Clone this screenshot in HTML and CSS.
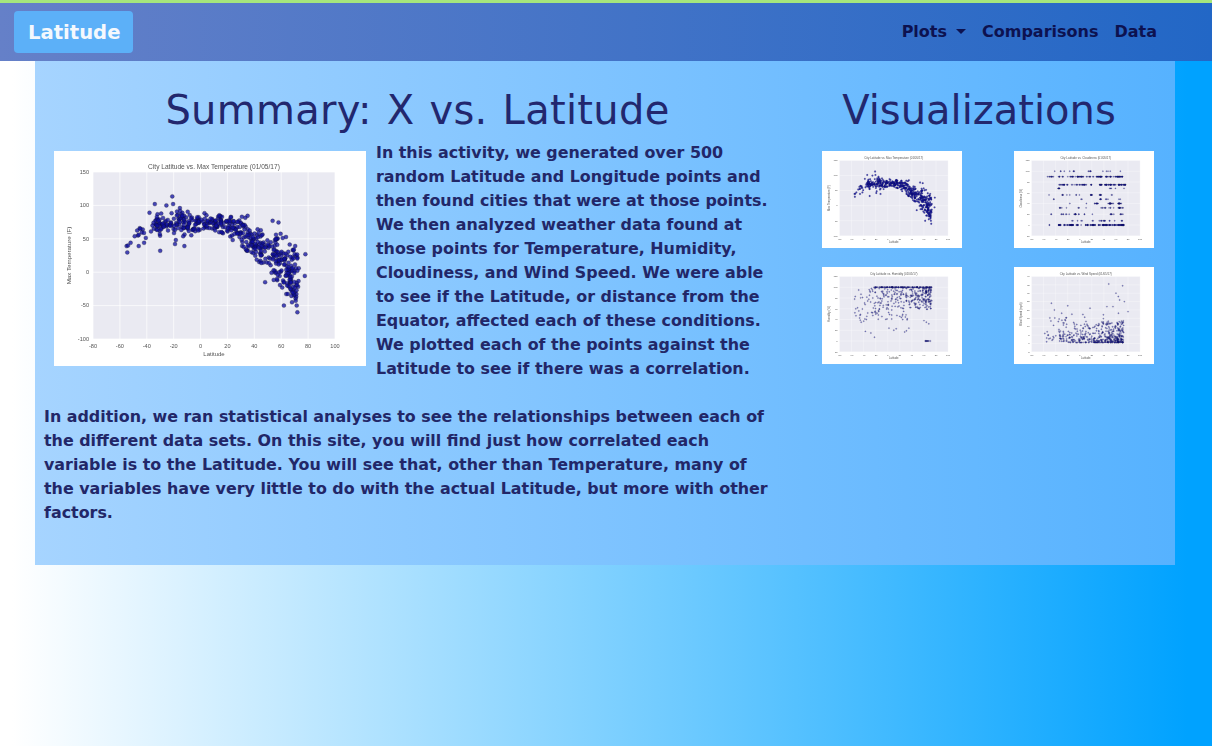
FILE: index.html
```html
<!DOCTYPE html>
<html lang="en">
<head>
    <meta charset="UTF-8">
    <meta name="viewport" content="width=device-width, initial-scale=1.0">
    <title>Latitude</title>
    <link rel="stylesheet" href="styles.css">
</head>
<body>
    <nav class="navbar">
        <a class="brand" href="#">Latitude</a>
        <ul class="nav-links">
            <li><a href="#">Plots<span class="caret"></span></a></li>
            <li><a href="#">Comparisons</a></li>
            <li><a href="#">Data</a></li>
        </ul>
    </nav>

    <main class="container">
        <section class="summary">
            <h1>Summary: X vs. Latitude</h1>
            <div class="intro">
                <svg class="plot plot-main" data-chart="temperature"></svg>
                <p>In this activity, we generated over 500 random Latitude and Longitude points and then found cities that were at those points. We then analyzed weather data found at those points for Temperature, Humidity, Cloudiness, and Wind Speed. We were able to see if the Latitude, or distance from the Equator, affected each of these conditions. We plotted each of the points against the Latitude to see if there was a correlation.</p>
            </div>
            <p>In addition, we ran statistical analyses to see the relationships between each of the different data sets. On this site, you will find just how correlated each variable is to the Latitude. You will see that, other than Temperature, many of the variables have very little to do with the actual Latitude, but more with other factors.</p>
        </section>

        <section class="visuals">
            <h1>Visualizations</h1>
            <div class="thumbs">
                <a href="#"><svg class="plot plot-thumb" data-chart="temperature"></svg></a>
                <a href="#"><svg class="plot plot-thumb" data-chart="cloudiness"></svg></a>
                <a href="#"><svg class="plot plot-thumb" data-chart="humidity"></svg></a>
                <a href="#"><svg class="plot plot-thumb" data-chart="wind"></svg></a>
            </div>
        </section>
    </main>

    <script src="charts.js"></script>
</body>
</html>
```

FILE: styles.css
```css
* {
    box-sizing: border-box;
}

body {
    font-family: "DejaVu Sans", Verdana, sans-serif;
    min-height: 746px;
    margin: 0;
    color: #222768;
    background: linear-gradient(to right, #fff 1%, #00a2ff 98%);
}

.navbar {
    display: flex;
    justify-content: space-between;
    align-items: center;
    height: 61px;
    padding: 0 55px 0 14px;
    border-top: 3px solid #a5e67c;
    background: linear-gradient(to right, #6580c8, #2267c6);
}

.brand {
    display: block;
    padding: 8px 13px 6px 14px;
    border-radius: 4px;
    background-color: #5cb0f8;
    color: #f4f8fd;
    font-size: 19.6px;
    font-weight: bold;
    line-height: 28px;
    text-decoration: none;
}

.nav-links {
    display: flex;
    gap: 16px;
    margin: 0 0 2px;
    padding: 0;
    list-style: none;
}

.nav-links a {
    color: #0d1250;
    font-size: 16px;
    font-weight: bold;
    text-decoration: none;
}

.caret {
    display: inline-block;
    margin-left: 9px;
    vertical-align: 3px;
    border-top: 5px solid #0d1250;
    border-left: 5px solid transparent;
    border-right: 5px solid transparent;
}

.container {
    display: flex;
    width: 1140px;
    height: 504px;
    margin-left: 35px;
    background: linear-gradient(to right, #a6d4ff, #56b2ff);
}

h1 {
    margin: 25px 0 7px;
    font-size: 40px;
    font-weight: normal;
    line-height: 48px;
    text-align: center;
    color: #22276e;
}

.summary {
    width: 765px;
    padding: 0 25px 0 9px;
}

.summary h1 {
    padding-left: 16px;
    letter-spacing: 0.3px;
    word-spacing: 2px;
}

.summary p {
    margin: 0 0 24px;
    font-size: 15.9px;
    font-weight: bold;
    line-height: 24px;
}

.intro {
    display: flex;
    align-items: flex-start;
}

.visuals {
    width: 375px;
}

.visuals h1 {
    padding-right: 17px;
}

.thumbs {
    display: grid;
    grid-template-columns: 140px 140px;
    justify-content: space-between;
    row-gap: 19px;
    margin: 17px 21px 0 22px;
}

.thumbs a {
    display: block;
    height: 97px;
}

.plot {
    display: block;
    flex: none;
    background-color: #fff;
}

.plot-main {
    width: 312px;
    height: 215px;
    margin: 10px 10px 0;
    filter: blur(0.7px);
}

.plot-thumb {
    width: 140px;
    height: 97px;
    filter: blur(0.7px);
}

.plot text {
    font-family: "Liberation Sans", Arial, sans-serif;
    fill: #555;
}
```

FILE: charts.js
```js
// scatter plots drawn from made up data, same frame for all four
const frame = { left: 39, right: 281, top: 21, bottom: 188 };

function makeRandom(seed) {
    return function () {
        seed = (seed + 0x6d2b79f5) | 0;
        let t = Math.imul(seed ^ (seed >>> 15), 1 | seed);
        t = (t + Math.imul(t ^ (t >>> 7), 61 | t)) ^ t;
        return ((t ^ (t >>> 14)) >>> 0) / 4294967296;
    };
}

function gauss(rand) {
    return (rand() + rand() + rand() + rand() - 2) * 1.2;
}

// most cities sit north of the equator
function randomLat(rand) {
    const r = rand();
    if (r < 0.04) return -55 + rand() * 20;
    if (r < 0.27) return -35 + rand() * 35;
    if (r < 0.48) return rand() * 30;
    if (r < 0.92) return 30 + rand() * 42;
    return 62 + rand() * 11;
}

function interpolate(stops, x) {
    for (let i = 1; i < stops.length; i++) {
        if (x <= stops[i][0]) {
            const a = stops[i - 1];
            const b = stops[i];
            return a[1] + (b[1] - a[1]) * (x - a[0]) / (b[0] - a[0]);
        }
    }
    return stops[stops.length - 1][1];
}

const tempCurve = [[-60, 35], [-45, 58], [-30, 72], [-10, 76], [15, 77], [30, 60], [45, 33], [60, 15], [75, -12]];

function temperaturePoints() {
    const rand = makeRandom(11);
    const points = [
        [-21, 113.5], [-34, 102], [-25.4, 100], [-20.4, 102], [-15.4, 96], [-38, 89],
        [53.6, 77], [58, 74.5], [-30, 32], [-12, 39], [-19, 42], [-18.4, 48],
        [-55, 39], [-54, 40], [-52, 44], [-46.5, 55], [-46, 56], [-43, 64], [-46, 39],
        [-42, 44], [78, 27], [77.5, -5.5], [72, -60], [71.5, -50], [73, 6], [57, 50],
        [48, -15], [62, -50], [68, -45], [70, -30], [71, 25], [72, 22], [70, 27]
    ];
    for (let i = 0; i < 480; i++) {
        const lat = randomLat(rand);
        const spread = lat < 28 ? 12 : lat < 48 ? 20 : 29;
        const value = interpolate(tempCurve, lat) + gauss(rand) * spread;
        if (value < 92) points.push([lat, value]);
    }
    return points;
}

function cloudinessPoints() {
    const rand = makeRandom(23);
    const rows = [[0, 170], [8, 22], [20, 32], [32, 34], [40, 40], [48, 14], [56, 26], [68, 12], [75, 100], [90, 110], [100, 18]];
    const points = [];
    rows.forEach(function (row) {
        let lat = randomLat(rand);
        for (let i = 0; i < row[1]; i++) {
            if (rand() < 0.45) lat = randomLat(rand);
            points.push([lat + rand() * 3, row[0]]);
        }
    });
    return points;
}

function humidityPoints() {
    const rand = makeRandom(37);
    const points = [
        [-55, 78], [-53, 60], [-48, 56], [-44, 35], [-40, 37], [-38, 41], [-37, 18],
        [-28, 15], [-22, 7], [-20, 50], [-15, 55], [2, 24], [10, 20], [14, 23], [28, 17],
        [31, 19], [35, 24], [60, 38], [64, 35], [68, 32]
    ];
    for (let i = 0; i < 110; i++) {
        points.push([-22 + rand() * 95, 100]);
    }
    for (let i = 0; i < 10; i++) {
        points.push([62 + rand() * 10, 0]);
    }
    for (let i = 0; i < 340; i++) {
        const lat = randomLat(rand);
        const low = lat > 35 ? 58 : 38;
        points.push([lat, low + Math.pow(rand(), 0.8) * (100 - low)]);
    }
    return points;
}

function windPoints() {
    const rand = makeRandom(51);
    const points = [
        [48, 35.5], [71, 34.5], [60, 30], [64, 28], [66, 26], [74, 25], [-47, 24],
        [-20, 22.5], [55, 22], [45, 22], [80, 19], [-42, 20], [17, 21], [-30, 18],
        [-54, 7], [-52, 5], [-58, 6]
    ];
    for (let i = 0; i < 480; i++) {
        const lat = randomLat(rand);
        const r = rand();
        let speed = 0.5 + r * r * 13;
        if (lat < -20) speed += rand() * 4;
        if (rand() < 0.12) speed += rand() * 6;
        points.push([lat, speed]);
    }
    return points;
}

const charts = {
    temperature: {
        title: "City Latitude vs. Max Temperature (01/05/17)",
        yLabel: "Max Temperature (F)",
        yMin: -100, yMax: 150, yStep: 50, dot: 2, opacity: 0.75,
        points: temperaturePoints()
    },
    cloudiness: {
        title: "City Latitude vs. Cloudiness (01/05/17)",
        yLabel: "Cloudiness (%)",
        yMin: -20, yMax: 120, yStep: 20, dot: 1.5, opacity: 0.55,
        points: cloudinessPoints()
    },
    humidity: {
        title: "City Latitude vs. Humidity (01/05/17)",
        yLabel: "Humidity (%)",
        yMin: -20, yMax: 120, yStep: 20, dot: 1.6, opacity: 0.5,
        points: humidityPoints()
    },
    wind: {
        title: "City Latitude vs. Wind Speed (01/05/17)",
        yLabel: "Wind Speed (mph)",
        yMin: -5, yMax: 40, yStep: 5, dot: 1.6, opacity: 0.5,
        points: windPoints()
    }
};

function drawChart(svg, chart) {
    const scaleX = function (lat) {
        return frame.left + (lat + 80) / 180 * (frame.right - frame.left);
    };
    const scaleY = function (value) {
        return frame.bottom - (value - chart.yMin) / (chart.yMax - chart.yMin) * (frame.bottom - frame.top);
    };

    let out = `<rect x="${frame.left}" y="${frame.top}" width="${frame.right - frame.left}" height="${frame.bottom - frame.top}" fill="#eaeaf2"/>`;

    for (let lat = -80; lat <= 100; lat += 20) {
        const x = scaleX(lat).toFixed(1);
        out += `<line x1="${x}" x2="${x}" y1="${frame.top}" y2="${frame.bottom}" stroke="#fff" stroke-width="0.7"/>`;
        out += `<text x="${x}" y="${frame.bottom + 9}" font-size="5.6" text-anchor="middle">${lat}</text>`;
    }
    for (let value = chart.yMin; value <= chart.yMax; value += chart.yStep) {
        const y = scaleY(value).toFixed(1);
        out += `<line x1="${frame.left}" x2="${frame.right}" y1="${y}" y2="${y}" stroke="#fff" stroke-width="0.7"/>`;
        out += `<text x="${frame.left - 4}" y="${(scaleY(value) + 1.8).toFixed(1)}" font-size="5.6" text-anchor="end">${value}</text>`;
    }

    chart.points.forEach(function (p) {
        out += `<circle cx="${scaleX(p[0]).toFixed(1)}" cy="${scaleY(p[1]).toFixed(1)}" r="${chart.dot}" fill="#0e0ea0" fill-opacity="${chart.opacity}" stroke="#111" stroke-width="0.25"/>`;
    });

    const midX = (frame.left + frame.right) / 2;
    const midY = (frame.top + frame.bottom) / 2;
    out += `<text x="${midX}" y="${frame.top - 3.5}" font-size="6.6" text-anchor="middle">${chart.title}</text>`;
    out += `<text x="${midX}" y="${frame.bottom + 17}" font-size="6" text-anchor="middle">Latitude</text>`;
    out += `<text x="17" y="${midY}" font-size="6.2" text-anchor="middle" transform="rotate(-90 17 ${midY})">${chart.yLabel}</text>`;

    svg.setAttribute("viewBox", "0 0 312 215");
    svg.setAttribute("preserveAspectRatio", "none");
    svg.innerHTML = out;
}

document.querySelectorAll(".plot").forEach(function (svg) {
    drawChart(svg, charts[svg.dataset.chart]);
});
```
